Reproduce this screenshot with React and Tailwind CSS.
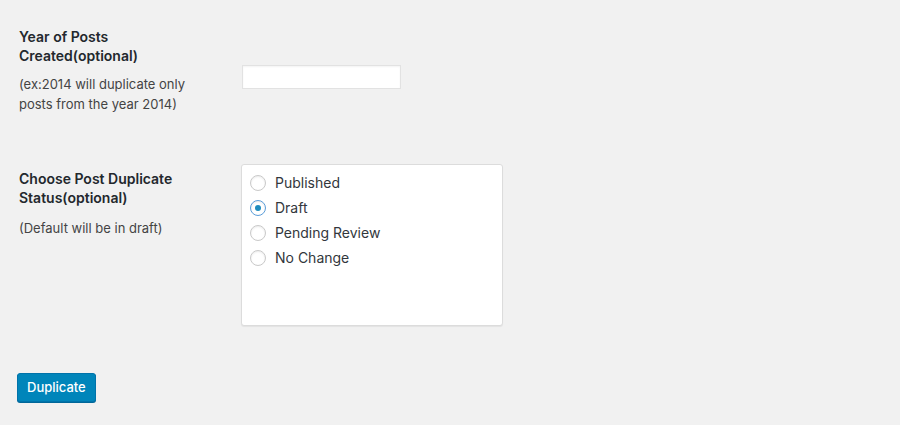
export default function App() {
  const options = ["Published", "Draft", "Pending Review", "No Change"];
  return (
    <div className="w-[900px] h-[425px] bg-[#f1f1f1] text-[#23282d] pl-[19px] pt-[27px] overflow-hidden" style={{ fontFamily: "Inter, 'Noto Sans', sans-serif" }}>
      <div className="flex">
        <div className="w-[223px] shrink-0">
          <div className="text-[14px] leading-[19px] font-semibold">Year of Posts<br />Created(optional)</div>
          <p className="mt-[9px] text-[13px] leading-[20px] text-[#444]">(ex:2014 will duplicate only<br />posts from the year 2014)</p>
        </div>
        <div className="pt-[38px]">
          <input type="text" className="block w-[159px] h-[24px] bg-white border border-[#e2e2e2] shadow-[inset_0_1px_2px_rgba(0,0,0,0.05)] outline-none" />
        </div>
      </div>
      <div className="flex mt-[54px]">
        <div className="w-[222px] shrink-0 pt-[1px]">
          <div className="text-[14px] leading-[19px] font-semibold">Choose Post Duplicate<br />Status(optional)</div>
          <p className="mt-[11px] text-[13px] leading-[20px] text-[#444]">(Default will be in draft)</p>
        </div>
        <div className="-mt-[4px] w-[262px] h-[162px] bg-white border border-[#dcdcdc] rounded-[3px] shadow-[0_1px_1px_rgba(0,0,0,0.06)] pl-[8px] pt-[5px]">
          {options.map((o) => (
            <div key={o} className="flex items-center h-[25px]">
              <span className={"w-[16px] h-[16px] rounded-full border bg-white flex items-center justify-center shadow-[inset_0_1px_2px_rgba(0,0,0,0.08)] " + (o === "Draft" ? "border-[#5b9dd9] shadow-[0_0_2px_rgba(30,140,190,0.8)]" : "border-[#c9c9c9]")}>
                {o === "Draft" && <span className="w-[6px] h-[6px] rounded-full bg-[#1e8cbe]" />}
              </span>
              <span className="ml-[9px] text-[14px] text-[#32373c]">{o}</span>
            </div>
          ))}
        </div>
      </div>
      <div className="mt-[47px]">
        <button className="-ml-[2px] h-[29px] px-[9px] bg-[#0085ba] border border-[#0073aa] rounded-[3px] text-white text-[13px] font-medium shadow-[0_1px_0_#006799]">Duplicate</button>
      </div>
    </div>
  );
}
